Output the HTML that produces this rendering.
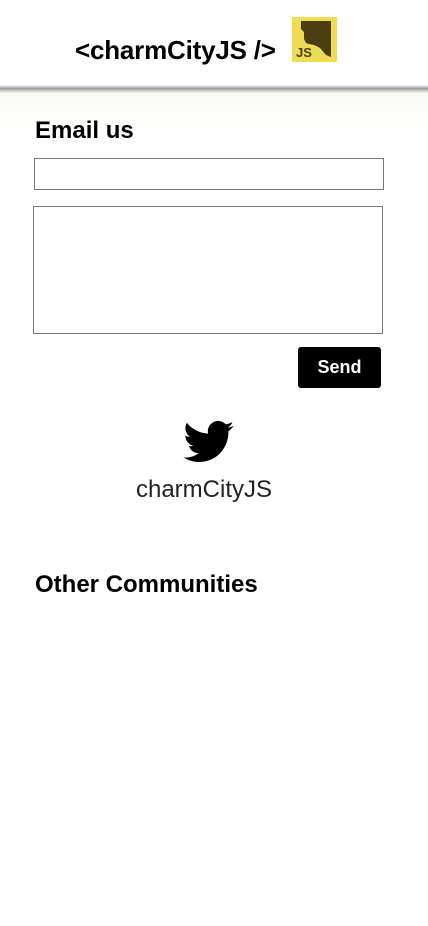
<!DOCTYPE html>
<html><head><meta charset="utf-8"><style>
body{margin:0;width:428px;height:926px;background:#fff;font-family:"Liberation Sans",sans-serif;position:relative;overflow:hidden}
.hdr{position:absolute;left:0;top:0;width:428px;height:86px;background:#fff}
.title{position:absolute;left:75px;top:35px;font-size:26px;font-weight:bold;color:#000;letter-spacing:-0.2px}
.logo{position:absolute;left:292px;top:17px;width:45px;height:45px;background:#efdc55}
.shadow{position:absolute;left:0;top:85px;width:428px;height:8px;background:linear-gradient(#fff,#9a9a9a 45%,#bbb 60%,#f7f7f2)}
.fade{position:absolute;left:0;top:93px;width:428px;height:40px;background:linear-gradient(#f9f9f3,#fff)}
h2{position:absolute;margin:0;font-size:24px;font-weight:bold}
.box{position:absolute;border:1px solid #777;box-sizing:border-box;background:#fff}
.btn{position:absolute;left:298px;top:347px;width:83px;height:41px;background:#000;color:#fff;border-radius:3px;font-weight:bold;font-size:18px;text-align:center;line-height:40px}
</style></head><body>
<div class="fade"></div>
<div class="hdr"></div>
<div class="shadow"></div>
<div class="title">&lt;charmCityJS /&gt;</div>
<div class="logo"><svg width="45" height="45"><path d="M9 4H39V40L34 38 28 31 22 28 17 27 14 26 12 22 12 15 9 12Z" fill="#4a3e10"/><text x="4" y="40" font-family="Liberation Sans" font-weight="bold" font-size="13" fill="#4a3e10">JS</text></svg></div>
<h2 style="left:35px;top:117px">Email us</h2>
<div class="box" style="left:34px;top:158px;width:350px;height:32px"></div>
<div class="box" style="left:33px;top:206px;width:350px;height:128px"></div>
<div class="btn">Send</div>
<svg style="position:absolute;left:183px;top:421px" width="51" height="42" viewBox="0 0 24 20"><path d="M24 2.3c-.9.4-1.8.7-2.8.8 1-.6 1.8-1.6 2.2-2.7-1 .6-2 1-3.1 1.2C19.3.6 18 0 16.6 0c-2.7 0-4.9 2.2-4.9 4.9 0 .4 0 .8.1 1.1C7.7 5.8 4.1 3.9 1.7.9c-.4.7-.7 1.6-.7 2.5 0 1.7.9 3.2 2.2 4.1-.8 0-1.6-.2-2.2-.6v.1c0 2.4 1.7 4.4 3.9 4.8-.4.1-.8.2-1.3.2-.3 0-.6 0-.9-.1.6 2 2.4 3.4 4.6 3.4-1.7 1.3-3.8 2.1-6.1 2.1-.4 0-.8 0-1.2-.1 2.2 1.4 4.8 2.2 7.5 2.2 9.1 0 14-7.5 14-14v-.6c1-.7 1.8-1.6 2.5-2.5z" fill="#000"/></svg>
<div style="position:absolute;left:0;width:408px;top:476px;text-align:center;font-size:24px;color:#222">charmCityJS</div>
<h2 style="left:35px;top:571px">Other Communities</h2>
</body></html>
